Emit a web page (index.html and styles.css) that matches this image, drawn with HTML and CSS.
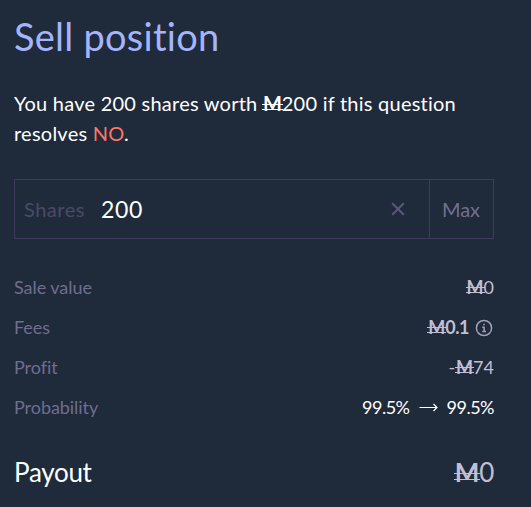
FILE: index.html
```
<!DOCTYPE html>
<html lang="en">
<head>
    <meta charset="UTF-8">
    <meta name="viewport" content="width=device-width, initial-scale=1.0">
    <title>Sell position</title>
    <link rel="stylesheet" href="styles.css">
</head>
<body>
    <div class="panel">
        <h1 class="title">Sell position</h1>
        <p class="summary">You have 200 shares worth <span class="mana">M</span>200 if this question<br>resolves <span class="no">NO</span>.</p>

        <div class="amount">
            <label class="amount-label" for="shares">Shares</label>
            <input class="amount-input" type="text" id="shares" value="200">
            <button class="clear" aria-label="Clear">
                <svg width="14" height="14" viewBox="0 0 14 14" fill="none" stroke="currentColor" stroke-width="2">
                    <path d="M1.2 1.2L12.8 12.8M12.8 1.2L1.2 12.8"/>
                </svg>
            </button>
            <button class="max">Max</button>
        </div>

        <div class="rows">
            <div class="row">
                <span class="label">Sale value</span>
                <span class="value"><span class="mana">M</span>0</span>
            </div>
            <div class="row">
                <span class="label">Fees</span>
                <span class="value fees"><b><span class="mana">M</span>0.1</b>
                    <svg class="info" width="18" height="18" viewBox="0 0 18 18" fill="none" stroke="currentColor" stroke-width="1.5">
                        <circle cx="9" cy="9" r="7.6"/>
                        <path d="M7.3 8.3H9.1V12.6M7.3 12.6H11M8.2 5.5H9.8"/>
                    </svg>
                </span>
            </div>
            <div class="row">
                <span class="label">Profit</span>
                <span class="value"><span class="minus">-</span><span class="mana">M</span>74</span>
            </div>
            <div class="row">
                <span class="label">Probability</span>
                <span class="value probability">
                    <span>99.5%</span>
                    <svg width="19" height="10" viewBox="0 0 19 10" fill="none" stroke="currentColor" stroke-width="1.2">
                        <path d="M0.5 5.5H18M14.5 2L18 5.5L14.5 9"/>
                    </svg>
                    <span>99.5%</span>
                </span>
            </div>
        </div>

        <div class="payout">
            <span>Payout</span>
            <span class="value"><span class="mana">M</span>0</span>
        </div>
    </div>
</body>
</html>
```
FILE: styles.css
```
* {
    box-sizing: border-box;
}

body {
    margin: 0;
    background-color: #1f2a3b;
    color: #fff;
    font-family: Lato, "Open Sans", sans-serif;
    font-size: 20px;
    line-height: 30px;
}

.panel {
    width: 480px;
    margin-left: 14px;
    padding-top: 14px;
}

.title {
    margin: 0;
    font-size: 38px;
    font-weight: 400;
    line-height: 45px;
    letter-spacing: 0.25px;
    color: #a5b4fc;
}

.summary {
    margin: 29px 0 31px;
    letter-spacing: 0.24px;
}

.no {
    color: #ff7566;
}

/* M crossed by two thin bars */
.mana {
    position: relative;
    display: inline-block;
    font-weight: 700;
    line-height: 1;
    letter-spacing: 0;
}

.mana::after {
    content: '';
    position: absolute;
    left: -1px;
    right: -1px;
    bottom: 3px;
    height: 4px;
    border-top: 1px solid currentColor;
    border-bottom: 1px solid currentColor;
}

.amount {
    display: flex;
    align-items: stretch;
    height: 60px;
    border: 1px solid #3f3b5c;
}

.amount-label {
    width: 86px;
    padding-left: 9px;
    line-height: 58px;
    letter-spacing: 0.5px;
    color: #4c4a68;
}

.amount-input {
    flex: 1;
    min-width: 0;
    padding: 0;
    border: none;
    outline: none;
    background: none;
    color: #fff;
    font-family: inherit;
    font-size: 23px;
    letter-spacing: 0.6px;
}

button {
    padding: 0;
    border: none;
    background: none;
    font-family: inherit;
    font-size: 20px;
}

.clear {
    display: flex;
    align-items: center;
    justify-content: center;
    width: 62px;
    color: #5b5878;
}

.max {
    width: 64px;
    padding: 0 1px 1px 0;
    border-left: 1px solid #3f3b5c;
    color: #71708f;
}

.rows {
    display: grid;
    gap: 10px;
    margin-top: 33px;
    font-size: 18px;
}

.row {
    display: flex;
    justify-content: space-between;
    height: 30px;
}

.label {
    letter-spacing: -0.05px;
    color: #706e8d;
}

.value {
    color: #c0bfd6;
}

.fees {
    display: flex;
    align-items: center;
    gap: 6px;
}

.fees b {
    letter-spacing: -0.5px;
}

.info {
    color: #a09fba;
    margin: 1px 1px 0 0;
}

.minus {
    margin-right: 1px;
}

.probability {
    display: flex;
    align-items: center;
    gap: 9px;
    letter-spacing: -0.5px;
    color: #fff;
}

.payout {
    display: flex;
    justify-content: space-between;
    margin-top: 35px;
    font-size: 26px;
    letter-spacing: -0.3px;
}

.payout .mana::after {
    bottom: 5px;
    height: 5px;
}
```
